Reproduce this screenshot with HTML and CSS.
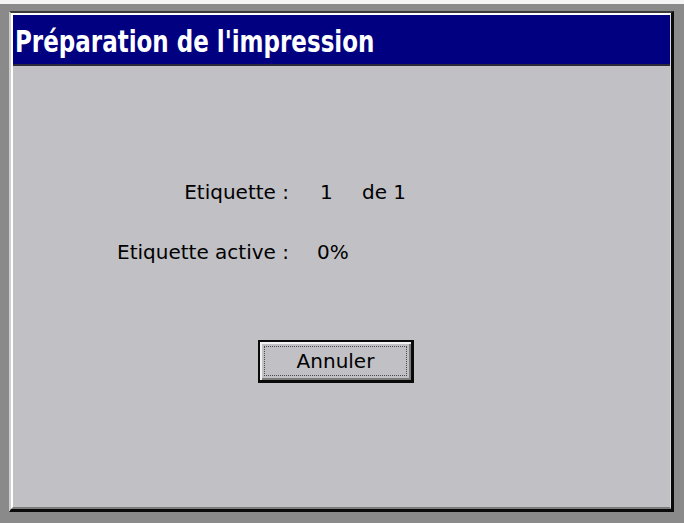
FILE: index.html
```html
<!DOCTYPE html>
<html lang="fr">
<head>
<meta charset="utf-8">
<title>Préparation de l'impression</title>
<link rel="stylesheet" href="styles.css">
</head>
<body>
<div class="window">
  <div class="frame">
    <div class="titlebar"><span class="title">Préparation de l'impression</span></div>
    <div class="content">
      <div class="fields">
        <div class="label">Etiquette :</div>
        <div class="value"><span class="num">1</span><span>de 1</span></div>
        <div class="label">Etiquette active :</div>
        <div class="value">0%</div>
      </div>
      <button class="btn" type="button"><span class="focus">Annuler</span></button>
    </div>
  </div>
</div>
</body>
</html>
```

FILE: styles.css
```css
html, body {
  margin: 0;
  padding: 0;
}
body {
  width: 684px;
  height: 523px;
  background: #8a8a8a;
  border-top: 4px solid #f4f4f4;
  box-sizing: border-box;
  padding: 7px 0 0 9px;
  font-family: "DejaVu Sans", Verdana, sans-serif;
  overflow: hidden;
}
.window {
  width: 665px;
  height: 501px;
  box-sizing: border-box;
  border-top: 2px solid #3a3a3a;
  border-left: 2px solid #cfcfcf;
  border-right: 3px solid #0a0a0a;
  border-bottom: 3px solid #0a0a0a;
}
.frame {
  height: 100%;
  box-sizing: border-box;
  border-top: 2px solid #ffffff;
  border-left: 2px solid #ffffff;
  border-right: 1px solid #d8d8d8;
  border-bottom: 2px solid #7c7c7c;
  display: flex;
  flex-direction: column;
  background: #c1c0c5;
}
.titlebar {
  height: 51px;
  box-sizing: border-box;
  background: #000080;
  border-bottom: 2px solid #2a2a3a;
  display: flex;
  align-items: center;
  padding: 4px 0 0 2px;
}
.title {
  color: #ffffff;
  font-weight: bold;
  font-size: 23px;
  transform: scaleY(1.28);
  transform-origin: left center;
  white-space: nowrap;
}
.content {
  flex: 1;
  display: flex;
  flex-direction: column;
  align-items: flex-start;
  padding-top: 114px;
  color: #000000;
  font-size: 20px;
}
.fields {
  display: grid;
  grid-template-columns: 276px auto;
  row-gap: 36px;
  line-height: 24px;
}
.label {
  text-align: right;
}
.value {
  padding-left: 28px;
  white-space: pre;
}
.num {
  display: inline-block;
  width: 42px;
  padding-left: 3px;
}
.btn {
  margin: 76px 0 0 245px;
  width: 156px;
  height: 43px;
  padding: 0;
  box-sizing: border-box;
  background: #c1c0c5;
  border: 2px solid #0a0a0a;
  border-right-width: 3px;
  border-bottom-width: 3px;
  box-shadow: inset 2px 2px 0 #f2f2f2, inset -2px -2px 0 #7c7c7c;
  font-family: "DejaVu Sans", Verdana, sans-serif;
  font-size: 20px;
  color: #000000;
  display: flex;
  align-items: stretch;
  justify-content: stretch;
}
.focus {
  flex: 1;
  margin: 4px;
  border: 1px dotted #4a4a4a;
  display: flex;
  align-items: center;
  justify-content: center;
  line-height: 24px;
}
```
